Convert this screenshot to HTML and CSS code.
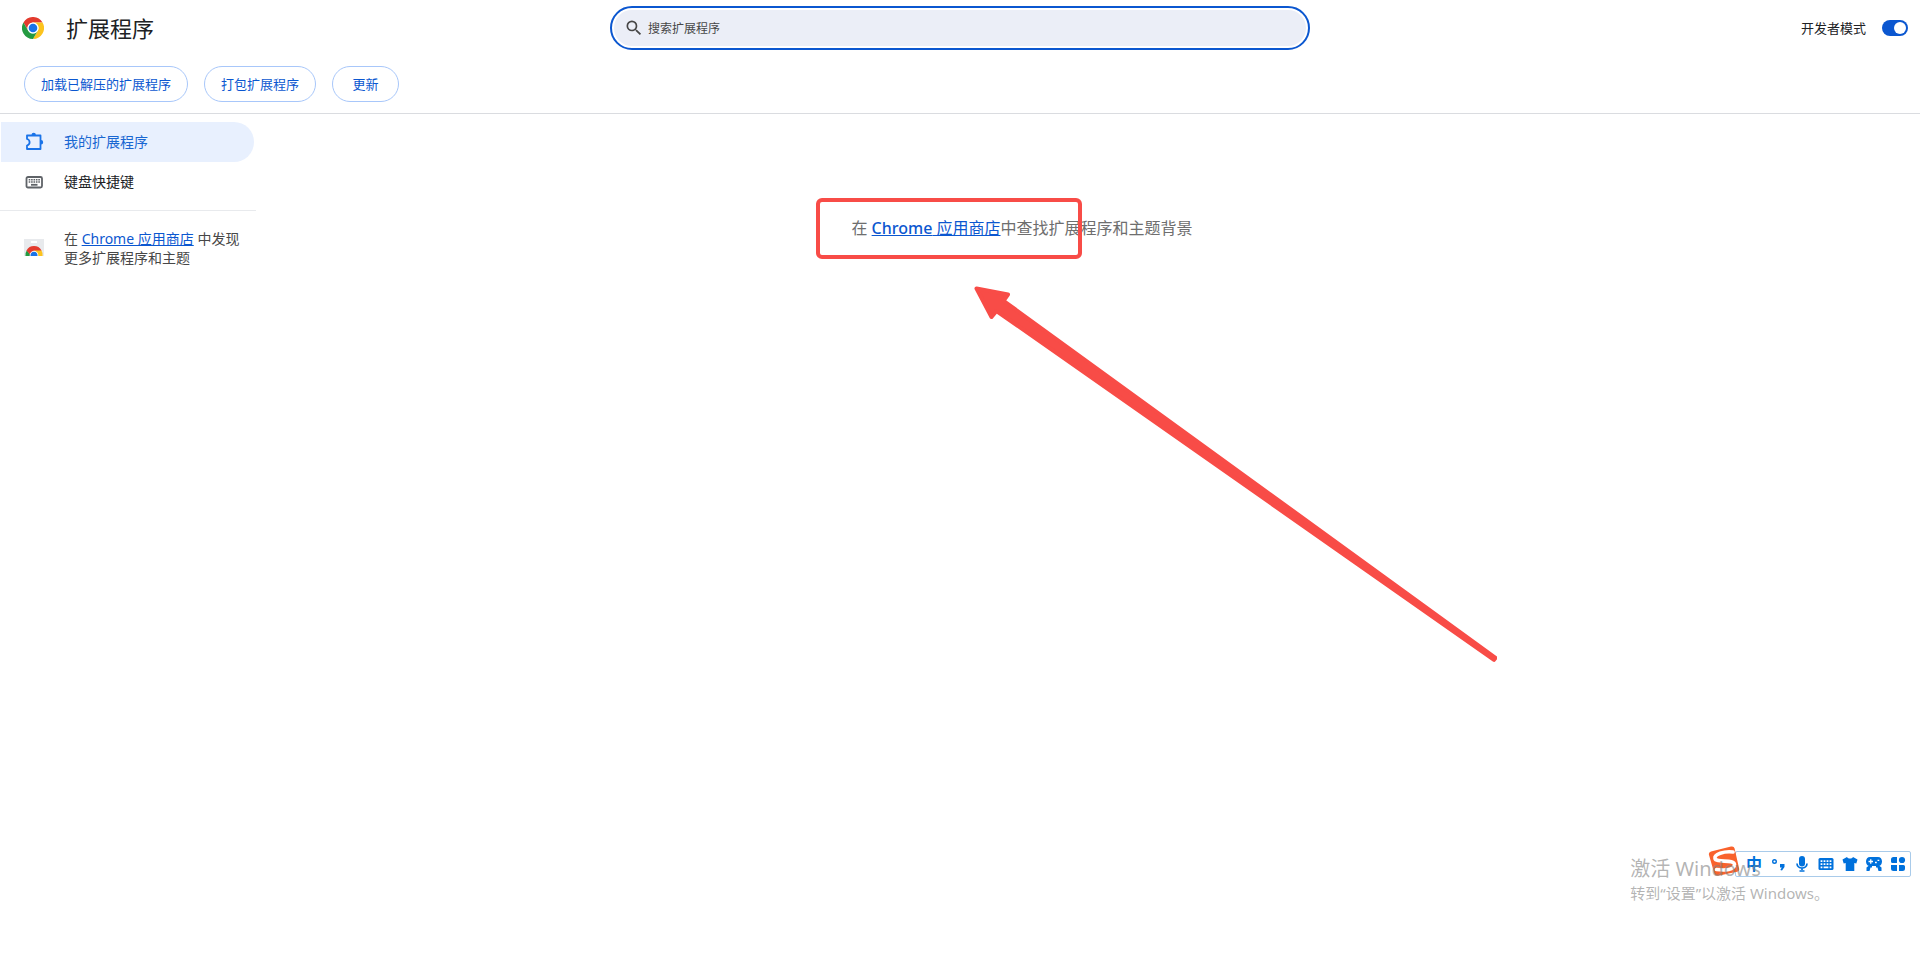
FILE: index.html
```html
<!DOCTYPE html>
<html lang="zh-CN">
<head>
    <meta charset="UTF-8">
    <meta name="viewport" content="width=device-width, initial-scale=1.0">
    <title>扩展程序</title>
    <link rel="stylesheet" href="styles.css">
</head>
<body>
    <header class="header">
        <div class="brand">
            <svg class="logo" viewBox="0 0 48 48" aria-hidden="true">
                <circle cx="24" cy="24" r="24" fill="#fff"/>
                <path fill="#e33b2e" d="M3.2 12A24 24 0 0 1 44.8 12H24a12 12 0 0 0-10.4 18z"/>
                <path fill="#fcc31e" d="M44.8 12A24 24 0 0 1 24 48l10.4-18A12 12 0 0 0 24 12z"/>
                <path fill="#249a41" d="M24 48A24 24 0 0 1 3.2 12l10.4 18A12 12 0 0 0 34.4 30z"/>
                <circle cx="24" cy="24" r="12" fill="#fff"/>
                <circle cx="24" cy="24" r="9.4" fill="#1a73e8"/>
            </svg>
            <h1>扩展程序</h1>
        </div>
        <div class="search">
            <svg class="search-icon" viewBox="0 0 24 24" aria-hidden="true">
                <path d="M15.5 14h-.79l-.28-.27A6.47 6.47 0 0 0 16 9.5 6.5 6.5 0 1 0 9.5 16c1.61 0 3.09-.59 4.23-1.57l.27.28v.79l5 4.99L20.49 19l-4.99-5zm-6 0C7.01 14 5 11.99 5 9.5S7.01 5 9.5 5 14 7.01 14 9.5 11.99 14 9.5 14z"/>
            </svg>
            <input type="search" placeholder="搜索扩展程序" aria-label="搜索扩展程序">
        </div>
        <div class="dev-mode">
            <label for="devMode">开发者模式</label>
            <input type="checkbox" id="devMode" class="toggle" checked>
        </div>
    </header>
    <div class="toolbar">
        <button type="button">加载已解压的扩展程序</button>
        <button type="button">打包扩展程序</button>
        <button type="button">更新</button>
    </div>
    <div class="container">
        <aside class="sidebar">
            <nav>
                <a href="#extensions" class="nav-item active">
                    <svg viewBox="0 0 20 20" aria-hidden="true">
                        <path fill="none" stroke="currentColor" stroke-width="1.8" stroke-linejoin="round" d="M3 3.500h13.500v13.500H3v-3.500c2-.6 2.600-1.800 2.600-3.200S5 7.500 3 7z"/>
                        <path fill="currentColor" d="M7.500 3a2.200 2.200 0 0 1 4.400 0zM17 8a2.200 2.200 0 0 1 0 4.400z"/>
                    </svg>
                    <span>我的扩展程序</span>
                </a>
                <a href="#shortcuts" class="nav-item">
                    <svg viewBox="0 0 20 20" aria-hidden="true">
                        <rect x="2.500" y="5" width="15.500" height="10.500" rx="1.500" fill="none" stroke="currentColor" stroke-width="1.800"/>
                        <path fill="none" stroke="currentColor" stroke-width="1.600" stroke-dasharray="1.600 .8" d="M4.700 7.700h11.200M4.700 10h11.200"/>
                        <path fill="none" stroke="currentColor" stroke-width="1.800" d="M7 12.800h6.500"/>
                    </svg>
                    <span>键盘快捷键</span>
                </a>
            </nav>
            <div class="promo">
                <svg viewBox="0 0 20 20" aria-hidden="true">
                    <path fill="#e8eaed" d="M0 1h20v17H0z"/>
                    <path fill="#fff" d="M7 3h6v2H7z"/>
                    <path fill="#249a41" d="M1.500 18a8.600 8.600 0 0 1 1.500-6L7 18z"/>
                    <path fill="#fcc31e" d="M18.500 18a8.600 8.600 0 0 0-1.300-6H10v6z"/>
                    <path fill="#e33b2e" d="M2.500 12.500a8.600 8.600 0 0 1 15 0H10L6.500 17z"/>
                    <path fill="#fff" d="M5.800 18a4.300 4.300 0 1 1 8.400 0z"/>
                    <path fill="#1a73e8" d="M6.600 18a3.500 3.500 0 1 1 6.800 0z"/>
                </svg>
                <p>在 <a href="#store">Chrome 应用商店</a> 中发现更多扩展程序和主题</p>
            </div>
        </aside>
        <main class="content">
            <p>在 <a href="#store"><span class="latin">Chrome</span> 应用商店</a>中查找扩展程序和主题背景</p>
        </main>
    </div>

    <!-- 标注 -->
    <div class="mark-box"></div>
    <svg class="mark-arrow" viewBox="0 0 524 378" aria-hidden="true">
        <path stroke-linejoin="round" stroke-width="4" d="M3.500 3.500L35 9.500 30.500 15.800 522.500 372.800 521 374.800 23.500 26 18.500 32z"/>
    </svg>

    <!-- 输入法状态栏 -->
    <div class="ime">
        <svg class="ime-logo" viewBox="0 0 32 30" aria-hidden="true">
            <path fill="#f9622c" d="M3 5.500L23 .5q3-.6 3.600 2l4.500 20q.6 2.700-2 3.300L10 29.700q-3 .5-3.600-2L1 9q-.7-2.700 2-3.500z"/>
            <path fill="none" stroke="#fff" stroke-width="3.600" stroke-linecap="round" d="M25 6C16 5 6 8 7 12.500S26.500 13 26.500 18.500 17 24.500 8.500 23.500"/>
        </svg>
        <span class="ime-lang">中</span>
        <svg viewBox="0 0 16 16" aria-hidden="true">
            <circle cx="4.500" cy="5.500" r="1.800" fill="none" stroke="currentColor" stroke-width="1.400"/>
            <path d="M10 8h4.500v3L12 14.500l-1.700-.5 1.500-2.500H10z"/>
        </svg>
        <svg viewBox="0 0 16 16" aria-hidden="true">
            <rect x="5" width="6" height="10.500" rx="3"/>
            <path fill="none" stroke="currentColor" stroke-width="1.700" d="M3 7.500c0 6 10 6 10 0M8 12v2M5.500 15h5"/>
        </svg>
        <svg viewBox="0 0 16 16" aria-hidden="true">
            <rect x=".5" y="2" width="15" height="12" rx="1.500"/>
            <path fill="none" stroke="#fff" stroke-width="1.800" stroke-dasharray="1.800 1.200" d="M2.600 5.200h11M2.600 8.200h11"/>
            <path fill="#fff" d="M2.600 10.500h1.800v1.700H2.600zM5.600 10.500h4.800v1.700H5.600zM11.600 10.500h1.800v1.700h-1.800z"/>
        </svg>
        <svg viewBox="0 0 16 16" aria-hidden="true">
            <path d="M5 1c1.200 2 4.800 2 6 0l4.500 2.500-1.200 4-2-.5v8H3.700V7l-2 .5-1.200-4z"/>
        </svg>
        <svg viewBox="0 0 16 16" aria-hidden="true">
            <path d="M4 1h8c2.500 0 4 2 4 4.500S14.500 10 12.500 10h-9C1.500 10 0 8 0 5.500S1.500 1 4 1z"/>
            <path fill="none" stroke="#fff" stroke-width="1.300" d="M2.500 5.500H7M4.750 3.250v4.500M9 6.500h1.800M11.500 4.300h1.800"/>
            <path d="M.5 11.500L3 9.500h3v2H4.500l-1 3.500H.5zM15.500 11.500L13 9.500h-3v2h1.500l1 3.500h3z"/>
        </svg>
        <svg viewBox="0 0 16 16" aria-hidden="true">
            <path d="M3.500 1H7v6H2.500A1.500 1.500 0 0 1 1 5.500v-2A2.500 2.500 0 0 1 3.500 1zM1 9h6v6H3.500A2.500 2.500 0 0 1 1 12.500zM9 9h4.500A1.500 1.500 0 0 1 15 10.500v2a2.500 2.500 0 0 1-2.500 2.500H9z"/>
            <circle cx="12" cy="4" r="3.100"/>
        </svg>
    </div>

    <!-- 系统水印 -->
    <div class="watermark">
        <p class="watermark-title">激活 Windows</p>
        <p>转到“设置”以激活 Windows。</p>
    </div>
</body>
</html>
```
FILE: styles.css
```css
* {
    box-sizing: border-box;
}

body {
    margin: 0;
    min-height: 100vh;
    position: relative;
    overflow: hidden;
    background-color: #fff;
    color: #202124;
    font-family: "Noto Sans", "Noto Sans CJK SC", sans-serif;
    font-size: 13px;
    line-height: 18px;
}

h1, p {
    margin: 0;
}

a {
    color: #0b57d0;
}

.header {
    display: grid;
    grid-template-columns: 1fr 700px 1fr;
    align-items: center;
    height: 56px;
}

.brand {
    display: flex;
    align-items: center;
    gap: 22px;
    padding-left: 22px;
}

.brand h1 {
    font-size: 22px;
    font-weight: 400;
    line-height: 32px;
}

.logo {
    width: 22px;
    height: 22px;
}

.search {
    display: flex;
    align-items: center;
    height: 44px;
    padding: 0 12px;
    border: 2px solid #0b57d0;
    border-radius: 22px;
    background-color: #ebeef7;
    box-shadow: inset 0 0 0 2px #fff;
}

.search-icon {
    width: 20px;
    height: 20px;
    margin-right: 4px;
    fill: #474747;
}

.search input {
    flex: 1;
    border: none;
    outline: none;
    padding: 0;
    background: none;
    font-family: inherit;
    font-size: 12px;
}

.search input::placeholder {
    color: #474747;
}

.dev-mode {
    display: flex;
    align-items: center;
    justify-content: flex-end;
    gap: 16px;
    padding-right: 12px;
}

.toggle {
    appearance: none;
    display: flex;
    align-items: center;
    justify-content: flex-end;
    width: 26px;
    height: 16px;
    margin: 0;
    padding: 2px;
    border-radius: 8px;
    background-color: #0b57d0;
}

.toggle::before {
    content: "";
    width: 12px;
    height: 12px;
    border-radius: 50%;
    background-color: #fff;
}

.toolbar {
    display: flex;
    gap: 16px;
    padding: 10px 24px 11px;
    border-bottom: 1px solid #dadce0;
}

.toolbar button {
    height: 36px;
    min-width: 67px;
    padding: 0 16px;
    border: 1px solid #a8c7fa;
    border-radius: 18px;
    background-color: #fff;
    color: #0b57d0;
    font-family: inherit;
    font-size: 13px;
    line-height: 18px;
}

.container {
    display: flex;
}

.sidebar {
    width: 256px;
    padding-top: 8px;
    font-size: 14px;
}

.sidebar svg {
    flex: none;
    width: 20px;
    height: 20px;
    margin-right: 20px;
}

.nav-item {
    display: flex;
    align-items: center;
    height: 40px;
    margin: 0 2px 0 1px;
    padding-left: 23px;
    border-radius: 0 20px 20px 0;
    color: #202124;
    text-decoration: none;
}

.nav-item svg {
    color: #5f6368;
}

.nav-item.active {
    background-color: #e8f0fe;
    color: #1967d2;
}

.nav-item.active svg {
    color: #1a73e8;
}

.promo {
    display: flex;
    align-items: center;
    margin-top: 8px;
    padding: 18px 16px 0 24px;
    border-top: 1px solid #e8eaed;
    color: #474747;
    line-height: 19px;
}

.content {
    flex: 1;
    padding: 102px 132px 0 0;
    color: #6e6e6e;
    font-size: 16px;
    line-height: 24px;
    text-align: center;
}

.latin {
    font-weight: 500;
}

.mark-box {
    position: absolute;
    top: 198px;
    left: 816px;
    width: 266px;
    height: 61px;
    border: 4px solid #f84c47;
    border-radius: 6px;
}

.mark-arrow {
    position: absolute;
    top: 285px;
    left: 973px;
    width: 524px;
    height: 378px;
    fill: #f84c47;
    stroke: #f84c47;
}

.ime {
    position: absolute;
    right: 9px;
    bottom: 76px;
    display: flex;
    align-items: center;
    gap: 8px;
    height: 26px;
    padding: 0 4px 0 10px;
    border: 1px solid #a9cbea;
    border-radius: 2px;
    background-color: #fff;
    color: #0071dc;
}

.ime svg {
    width: 16px;
    height: 16px;
    fill: currentColor;
}

.ime .ime-logo {
    position: absolute;
    left: -28px;
    bottom: 0;
    width: 32px;
    height: 30px;
}

.ime-lang {
    width: 16px;
    font-size: 16px;
    font-weight: 700;
    line-height: 24px;
}

.watermark {
    position: absolute;
    right: 91px;
    bottom: 48px;
    color: rgba(130, 130, 130, 0.6);
    font-size: 15px;
    line-height: 24px;
}

.watermark-title {
    font-size: 20px;
}
```
